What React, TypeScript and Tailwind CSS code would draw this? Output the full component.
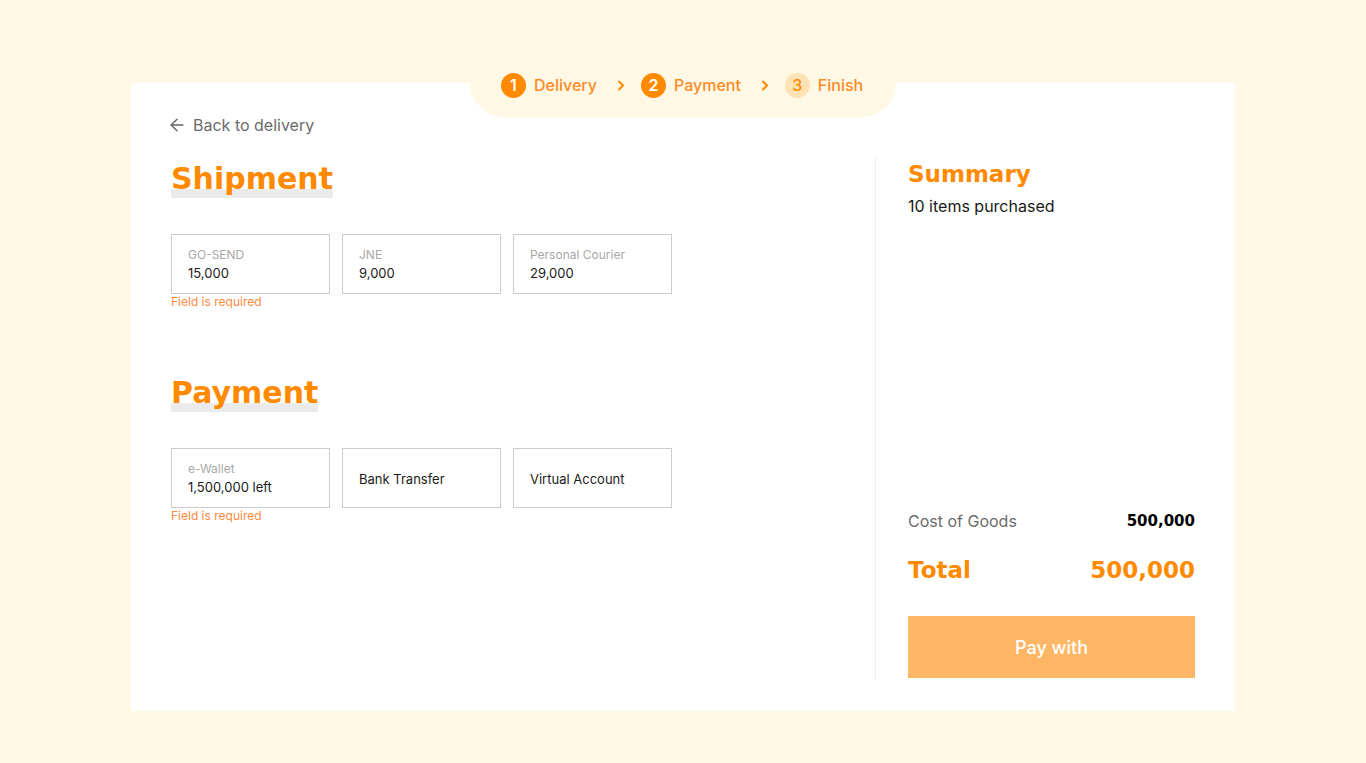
import { ArrowLeft } from "lucide-react";

const headingFont = "font-['DejaVu_Sans',sans-serif]";

const Chevron = () => (
  <svg width="8" height="11" viewBox="0 0 8 11" className="ml-[20px] mr-[16px]">
    <path d="M2 1.5 L6 5.5 L2 9.5" fill="none" stroke="#ff8a00" strokeWidth="2" strokeLinecap="round" strokeLinejoin="round" />
  </svg>
);

const Step = ({ n, label, done }: { n: number; label: string; done: boolean }) => (
  <div className="flex items-center gap-[8px]">
    <div
      className={
        done
          ? "w-[25px] h-[25px] rounded-full bg-[#ff8a00] text-white flex items-center justify-center text-[16px] font-semibold"
          : "w-[25px] h-[25px] rounded-full bg-[#ffe2b3] text-[#ff8a00] flex items-center justify-center text-[16px] font-medium"
      }
    >
      {n}
    </div>
    <span className="text-[16px] font-medium text-[#ff8a1f] leading-6">{label}</span>
  </div>
);

const Option = ({ label, value }: { label?: string; value: string }) => (
  <div className="w-[159px] h-[60px] border border-[#cccccc] flex flex-col justify-center px-[16px] bg-white">
    {label && <span className="text-[12px] leading-4 text-[#a8a8a8]">{label}</span>}
    <span className="text-[13px] leading-[18px] text-[#1a1a1a] mt-[1px]">{value}</span>
  </div>
);

const Heading = ({ children }: { children: string }) => (
  <h2
    className={`${headingFont} self-start text-[30px] font-bold text-[#ff8a00] h-[40px] leading-[40px] bg-[linear-gradient(to_bottom,transparent_30px,#ebebeb_30px,#ebebeb_39px,transparent_39px)]`}
  >
    {children}
  </h2>
);

export default function App() {
  return (
    <div className="min-h-screen bg-[#fff8e5] pt-[83px] font-['Inter',sans-serif]">
      <div className="relative mx-auto w-[1104px] h-[628px] bg-white flex px-10 pt-[30px] pb-[31px]">
        <div className="absolute left-[339px] -top-[30px] h-[64px] w-[426px] bg-[#fff8e5] rounded-b-[34px] flex items-center justify-start pl-[31px]">
          <Step n={1} label="Delivery" done />
          <Chevron />
          <Step n={2} label="Payment" done />
          <Chevron />
          <Step n={3} label="Finish" done={false} />
        </div>

        <div className="w-[704px] flex flex-col">
          <a className="flex items-center gap-[6px] text-[16px] leading-6 text-[#6b6b6b] cursor-pointer">
            <ArrowLeft size={20} strokeWidth={1.75} className="text-[#666] -ml-[4px]" />
            Back to delivery
          </a>
          <div className="mt-[22px] flex flex-col">
            <Heading>Shipment</Heading>
            <div className="mt-[35px] flex gap-[12px]">
              <Option label="GO-SEND" value="15,000" />
              <Option label="JNE" value="9,000" />
              <Option label="Personal Courier" value="29,000" />
            </div>
            <p className="text-[12px] leading-4 text-[#ff8a3d]">Field is required</p>
          </div>
          <div className="mt-[63px] flex flex-col">
            <Heading>Payment</Heading>
            <div className="mt-[35px] flex gap-[12px]">
              <Option label="e-Wallet" value="1,500,000 left" />
              <Option value="Bank Transfer" />
              <Option value="Virtual Account" />
            </div>
            <p className="text-[12px] leading-4 text-[#ff8a3d]">Field is required</p>
          </div>
        </div>

        <div className="w-[320px] mt-[45px] border-l border-[#f5ece2] pl-8 flex flex-col">
          <h3 className={`${headingFont} text-[23px] leading-8 font-bold text-[#ff8a00]`}>Summary</h3>
          <p className="mt-1 text-[16px] leading-6 text-[#1a1a1a]">10 items purchased</p>
          <div className="flex-1" />
          <div className="flex items-center justify-between text-[16px] leading-6">
            <span className="text-[#6b6b6b]">Cost of Goods</span>
            <span className={`${headingFont} font-bold text-[15px] text-black`}>500,000</span>
          </div>
          <div className={`${headingFont} mt-[21px] flex items-center justify-between text-[23px] leading-8 font-bold text-[#ff8a00]`}>
            <span>Total</span>
            <span>500,000</span>
          </div>
          <button className="mt-[30px] mb-[2px] h-[62px] w-full bg-[#ffb766] text-white text-[18px] font-medium">
            Pay with
          </button>
        </div>
      </div>
    </div>
  );
}
